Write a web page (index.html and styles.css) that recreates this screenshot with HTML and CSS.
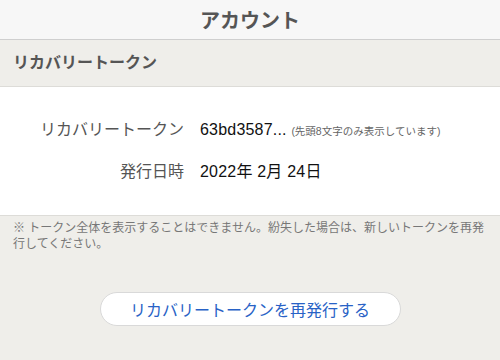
FILE: index.html
```html
<!DOCTYPE html>
<html lang="ja">
<head>
    <meta charset="UTF-8">
    <meta name="viewport" content="width=device-width, initial-scale=1.0">
    <title>アカウント</title>
    <link rel="stylesheet" href="styles.css">
</head>
<body>
    <div class="header">
        <h1>アカウント</h1>
    </div>

    <div class="section-title">リカバリートークン</div>

    <div class="card">
        <div class="row">
            <div class="label">リカバリートークン</div>
            <div class="value">63bd3587... <span class="hint">(先頭8文字のみ表示しています)</span></div>
        </div>
        <div class="row">
            <div class="label">発行日時</div>
            <div class="value">2022年 2月 24日</div>
        </div>
    </div>

    <p class="note">※ トークン全体を表示することはできません。紛失した場合は、新しいトークンを再発行してください。</p>

    <div class="actions">
        <button class="reissue">リカバリートークンを再発行する</button>
    </div>
</body>
</html>
```

FILE: styles.css
```css
body {
    font-family: "Liberation Sans", "Noto Sans CJK JP", sans-serif;
    margin: 0;
    background: #efeeea;
    color: #222;
}
.header {
    background: #f7f7f7;
    border-bottom: 1px solid #cfcfcf;
    height: 39px;
    display: flex;
    align-items: center;
    justify-content: center;
}
.header h1 {
    margin: 0;
    font-size: 20px;
    font-weight: bold;
    color: #555;
}
.section-title {
    height: 46px;
    line-height: 46px;
    padding: 0 13px;
    font-size: 16px;
    font-weight: bold;
    color: #555;
    border-bottom: 1px solid #dddcd8;
}
.card {
    background: #fff;
    border-bottom: 1px solid #dddcd8;
    padding: 31px 0;
    display: flex;
    flex-direction: column;
    gap: 17px;
}
.row {
    display: grid;
    grid-template-columns: 184px 1fr;
    column-gap: 16px;
    font-size: 16px;
    line-height: 24px;
}
.label {
    text-align: right;
    color: #555;
}
.value {
    color: #111;
    letter-spacing: 0.2px;
}
.hint {
    font-size: 10.5px;
    letter-spacing: 0;
    color: #666;
}
.note {
    margin: 0;
    padding: 4px 13px 0;
    font-size: 12px;
    line-height: 16px;
    color: #777;
}
.actions {
    display: flex;
    justify-content: center;
    margin-top: 40px;
}
.reissue {
    width: 301px;
    height: 34px;
    background: #fff;
    border: 1px solid #d9d9d9;
    border-radius: 17px;
    font-family: inherit;
    font-size: 16px;
    color: #2862c6;
    cursor: pointer;
}
```
